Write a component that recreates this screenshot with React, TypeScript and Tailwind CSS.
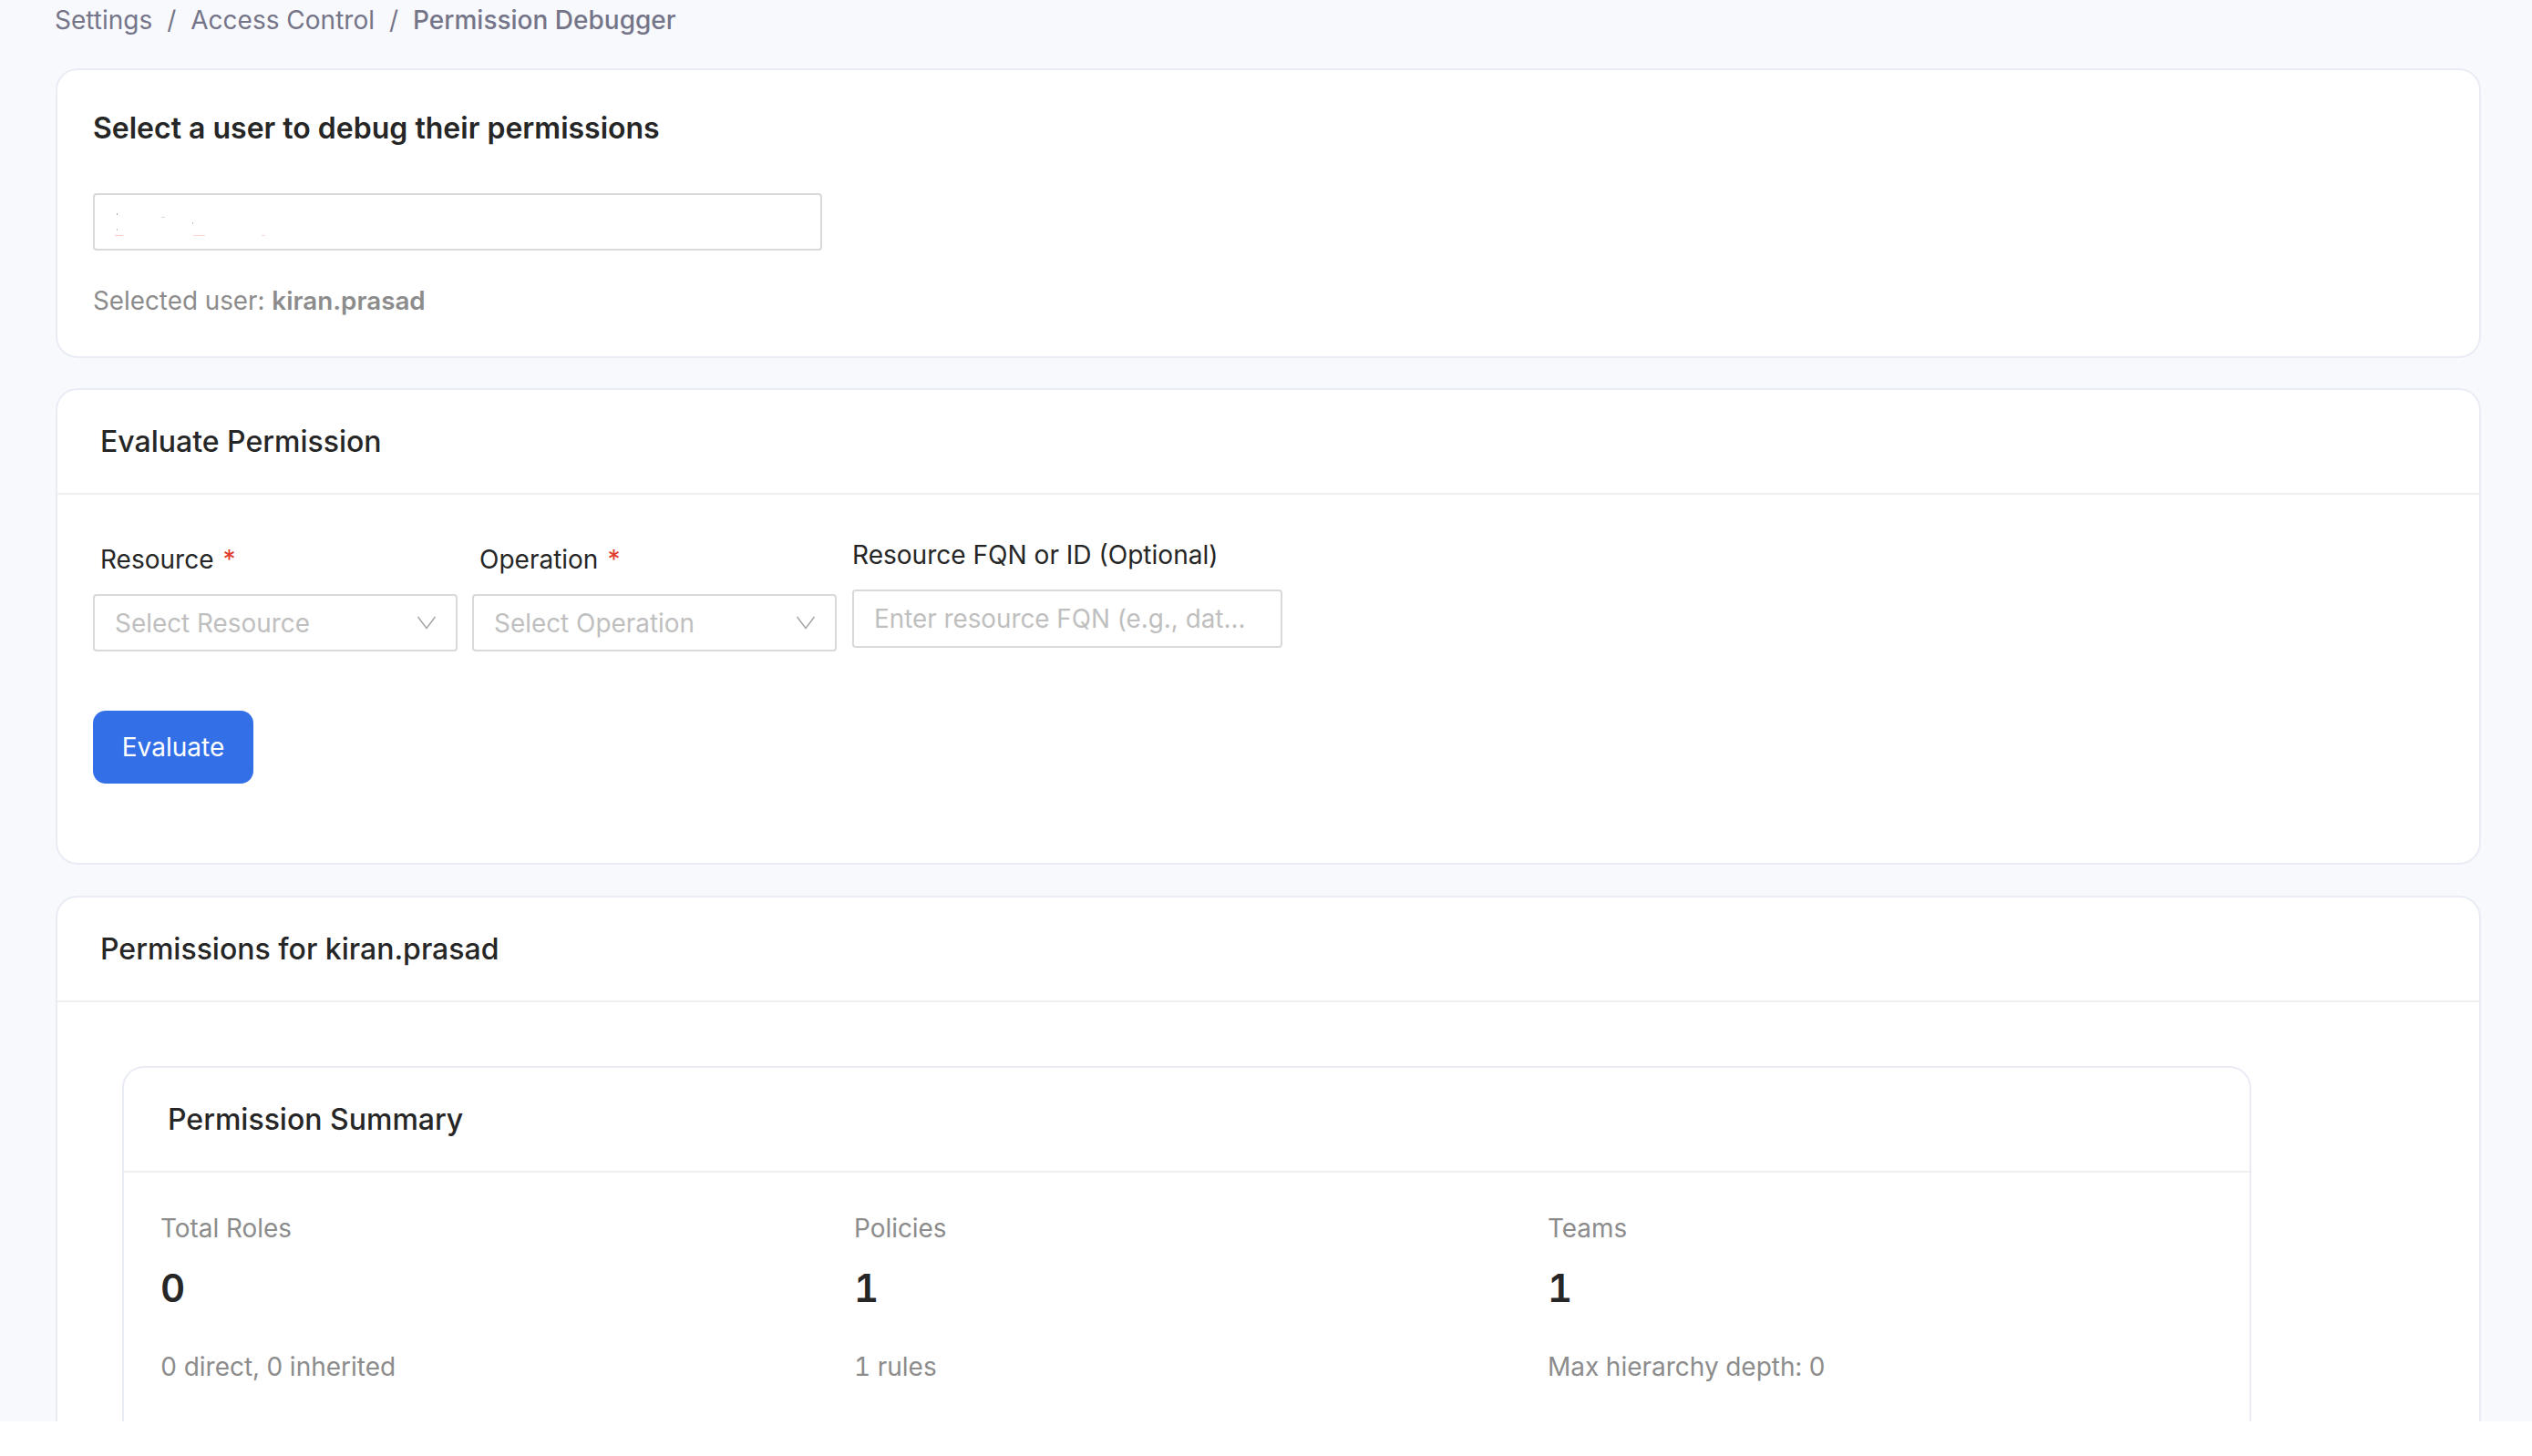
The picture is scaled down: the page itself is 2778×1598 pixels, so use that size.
import React from "react";

function Chevron() {
  return (
    <svg width="22" height="15" viewBox="0 0 22 15" fill="none" stroke="#a6a6a6" strokeWidth="1.5" className="shrink-0">
      <path d="M1.5 1 L11 13.5 L20.5 1" />
    </svg>
  );
}

function Req({ label }: { label: string }) {
  return (
    <div className="flex h-[35px] items-center pl-[8px] text-[28px] leading-[35px] text-[#262626]">
      <span>{label}</span>
      <span className="ml-[10px] text-[28px] text-[#e03b2d]">*</span>
    </div>
  );
}

function SelectBox({ text }: { text: string }) {
  return (
    <div className="mt-[20px] flex h-[63px] w-[400px] items-center justify-between rounded-[4px] border-2 border-[#d9d9d9] bg-white pl-[22px] pr-[21px] text-[27.9px] text-[#bfbfbf]">
      <span className="pt-[2px]">{text}</span>
      <Chevron />
    </div>
  );
}

function Stat({ label, value, sub }: { label: string; value: string; sub: string }) {
  return (
    <div className="w-[761px]">
      <div className="h-[34px] text-[27.9px] leading-[34px] text-[#8c8c8c]">{label}</div>
      <div className="mt-[27px] h-[44px] text-[42px] font-semibold tabular-nums leading-[44px] text-[#262626]">{value}</div>
      <div className="mt-[47px] h-[34px] text-[28px] tabular-nums leading-[34px] text-[#8c8c8c]">{sub}</div>
    </div>
  );
}

export default function App() {
  return (
    <div className="h-[1560px] overflow-hidden bg-[#f8f9fc] pl-[61px] pr-[56px] font-['Inter',sans-serif]">
      <div className="-ml-px flex h-[75px] items-start pt-[4px] text-[28px] leading-[36px] text-[#757589]">
        <span>Settings</span>
        <span className="mx-[16px]">/</span>
        <span>Access Control</span>
        <span className="mx-[16px]">/</span>
        <span className="font-medium">Permission Debugger</span>
      </div>

      <section className="h-[318px] rounded-[24px] border-2 border-[#eaecf5] bg-white pl-[39px] pt-[46px]">
        <h2 className="h-[36px] text-[32px] font-semibold leading-[36px] text-[#262626]">Select a user to debug their permissions</h2>
        <div className="relative mt-[53px] h-[63px] w-[800px] rounded-[4px] border-2 border-[#d9d9d9] bg-white">
          <svg width="170" height="34" viewBox="0 0 170 34" className="absolute left-[22px] top-[19px]">
            <rect x="2" y="1" width="1" height="2" fill="#a6a6a6" />
            <rect x="51" y="5" width="4" height="1" fill="#d9d9d9" />
            <rect x="85" y="11" width="1" height="2" fill="#bfbfbf" />
            <rect x="2" y="18" width="1" height="2" fill="#bfbfbf" />
            <rect x="0" y="25" width="9" height="1" fill="#ffc9c4" />
            <rect x="86" y="25" width="13" height="1" fill="#ffd6d2" />
            <rect x="161" y="25" width="4" height="1" fill="#ffd6d2" />
          </svg>
        </div>
        <p className="mt-[38px] h-[34px] text-[27.8px] leading-[34px] text-[#8c8c8c]">
          Selected user: <span className="font-semibold">kiran.prasad</span>
        </p>
      </section>

      <section className="mt-[33px] h-[523px] rounded-[24px] border-2 border-[#eaecf5] bg-white">
        <div className="flex h-[115px] items-center border-b-2 border-[#f0f0f0] pl-[47px] text-[32px] font-medium text-[#262626]">
          Evaluate Permission
        </div>
        <div className="pl-[39px]">
          <div className="flex items-start pt-[54px]">
            <div className="mr-[16px]">
              <Req label="Resource" />
              <SelectBox text="Select Resource" />
            </div>
            <div className="mr-[17px]">
              <Req label="Operation" />
              <SelectBox text="Select Operation" />
            </div>
            <div className="-mt-[6px]">
              <div className="h-[36px] text-[28.05px] leading-[36px] text-[#262626]">Resource FQN or ID (Optional)</div>
              <div className="mt-[20px] flex h-[64px] w-[472px] items-center rounded-[4px] border-2 border-[#d9d9d9] bg-white pl-[22px] pt-[2px] text-[27.8px] text-[#bfbfbf]">
                Enter resource FQN (e.g., dat...
              </div>
            </div>
          </div>
          <button className="mt-[65px] flex h-[80px] w-[176px] items-center justify-center rounded-[14px] bg-[#3370e8] text-[28px] text-white">
            Evaluate
          </button>
        </div>
      </section>

      <section className="mt-[34px] h-[800px] rounded-[24px] border-2 border-[#eaecf5] bg-white">
        <div className="flex h-[115px] items-center border-b-2 border-[#f0f0f0] pl-[47px] text-[32px] font-medium text-[#262626]">
          Permissions for kiran.prasad
        </div>
        <div className="pl-[71px] pt-[70px]">
          <div className="h-[600px] w-[2336px] rounded-[24px] border-2 border-[#eaecf5] bg-white">
            <div className="flex h-[115px] items-center border-b-2 border-[#f0f0f0] pl-[48px] text-[32px] font-medium text-[#262626]">
              Permission Summary
            </div>
            <div className="flex pl-[40px] pt-[44px]">
              <Stat label="Total Roles" value="0" sub="0 direct, 0 inherited" />
              <Stat label="Policies" value="1" sub="1 rules" />
              <Stat label="Teams" value="1" sub="Max hierarchy depth: 0" />
            </div>
          </div>
        </div>
      </section>
    </div>
  );
}
